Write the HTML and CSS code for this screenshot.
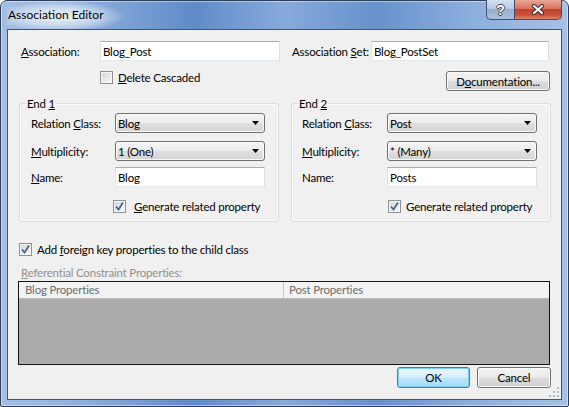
FILE: index.html
```html
<!DOCTYPE html>
<html lang="en">
<head>
<meta charset="UTF-8" />
<title>Association Editor</title>
<link rel="stylesheet" href="styles.css">
</head>
<body>

<div class="window">

  <!-- caption -->
  <div class="titlebar">
    <span class="title">Association Editor</span>
    <div class="caption-buttons">
      <div class="cap help">?</div>
      <div class="cap close">
        <svg width="14" height="11" viewBox="0 0 14 11">
          <path d="M3 2l8 7M11 2l-8 7" stroke="#3a2a2a" stroke-width="4.2" stroke-linecap="round" fill="none"/>
          <path d="M3 2l8 7M11 2l-8 7" stroke="#fff" stroke-width="2.2" stroke-linecap="round" fill="none"/>
        </svg>
      </div>
    </div>
  </div>

  <div class="client">

    <div class="row names">
      <span class="lbl lbl-assoc"><u>A</u>ssociation:</span>
      <div class="tb tb-assoc">Blog_Post</div>
      <span class="lbl lbl-set">Association <u>S</u>et:</span>
      <div class="tb tb-set">Blog_PostSet</div>
    </div>

    <div class="row opts">
      <span class="cb"></span>
      <span class="cb-text"><u>D</u>elete Cascaded</span>
      <div class="btn btn-doc">D<u>o</u>cumentation...</div>
    </div>

    <div class="ends">
      <fieldset class="group end1">
        <legend>End <u>1</u></legend>
        <div class="grow">
          <span class="glbl">Relation <u>C</u>lass:</span>
          <div class="combo"><span>Blog</span><svg class="arrow" width="7" height="4" viewBox="0 0 7 4"><path d="M0 0h7L3.5 4z" fill="#000"/></svg></div>
        </div>
        <div class="grow">
          <span class="glbl"><u>M</u>ultiplicity:</span>
          <div class="combo"><span>1 (One)</span><svg class="arrow" width="7" height="4" viewBox="0 0 7 4"><path d="M0 0h7L3.5 4z" fill="#000"/></svg></div>
        </div>
        <div class="grow name-row">
          <span class="glbl"><u>N</u>ame:</span>
          <div class="tb tb-name">Blog</div>
        </div>
        <div class="grow check-row">
          <span class="cb checked"><svg width="11" height="11" viewBox="0 0 11 11"><path d="M2 5.5l2.5 3L9 1.5" stroke="#4b5e8e" stroke-width="1.7" fill="none"/></svg></span>
          <span class="cb-text"><u>G</u>enerate related property</span>
        </div>
      </fieldset>

      <fieldset class="group end2">
        <legend>End <u>2</u></legend>
        <div class="grow">
          <span class="glbl">Relation <u>C</u>lass:</span>
          <div class="combo"><span>Post</span><svg class="arrow" width="7" height="4" viewBox="0 0 7 4"><path d="M0 0h7L3.5 4z" fill="#000"/></svg></div>
        </div>
        <div class="grow">
          <span class="glbl"><u>M</u>ultiplicity:</span>
          <div class="combo"><span>* (Many)</span><svg class="arrow" width="7" height="4" viewBox="0 0 7 4"><path d="M0 0h7L3.5 4z" fill="#000"/></svg></div>
        </div>
        <div class="grow name-row">
          <span class="glbl">Name:</span>
          <div class="tb tb-name">Posts</div>
        </div>
        <div class="grow check-row">
          <span class="cb checked"><svg width="11" height="11" viewBox="0 0 11 11"><path d="M2 5.5l2.5 3L9 1.5" stroke="#4b5e8e" stroke-width="1.7" fill="none"/></svg></span>
          <span class="cb-text">Generate related property</span>
        </div>
      </fieldset>
    </div>

    <div class="row fk">
      <span class="cb checked"><svg width="11" height="11" viewBox="0 0 11 11"><path d="M2 5.5l2.5 3L9 1.5" stroke="#4b5e8e" stroke-width="1.7" fill="none"/></svg></span>
      <span class="cb-text">Add <u>f</u>oreign key properties to the child class</span>
    </div>

    <div class="ref-label"><u>R</u>eferential Constraint Properties:</div>

    <div class="grid">
      <div class="grid-head">
        <span class="col col-blog">Blog Properties</span>
        <span class="col col-post">Post Properties</span>
      </div>
      <div class="grid-body"></div>
    </div>

    <div class="buttons">
      <div class="btn btn-ok">OK</div>
      <div class="btn btn-cancel">Cancel</div>
    </div>

    <svg class="grip" width="10" height="10" viewBox="0 0 10 10">
      <g fill="#b6bcc6">
        <rect x="8" y="0" width="2" height="2"/>
        <rect x="4" y="4" width="2" height="2"/><rect x="8" y="4" width="2" height="2"/>
        <rect x="0" y="8" width="2" height="2"/><rect x="4" y="8" width="2" height="2"/><rect x="8" y="8" width="2" height="2"/>
      </g>
    </svg>

  </div>
</div>

</body>
</html>
```

FILE: styles.css
```css
* {
  box-sizing: border-box;
}
body {
  margin: 0;
  background: #fff;
  font-family: Lato, "Liberation Sans", sans-serif;
  font-size: 11.5px;
  letter-spacing: -0.2px;
  color: #000;
  white-space: nowrap;
}
u {
  text-decoration: underline;
  text-underline-offset: 1px;
}

/* window frame */
.window {
  width: 569px;
  height: 407px;
  border: 1px solid #2c3d55;
  border-radius: 7px 7px 2px 2px;
  padding: 0 6px 6px;
  display: flex;
  flex-direction: column;
  background: linear-gradient(to right, #a3bee3 0%, #8fb0dd 14%, #5f8bc8 34%, #88aadb 50%, #6791cc 66%, #8eb0de 84%, #a6c1e5 100%);
  box-shadow: inset 0 0 0 1px rgba(255,255,255,0.45);
}
.titlebar {
  height: 28px;
  display: flex;
  align-items: flex-start;
}
.title {
  padding: 0 20px 0 1px;
  line-height: 28px;
  font-size: 12px;
  letter-spacing: 0;
  background: radial-gradient(ellipse at 45% 55%, rgba(255,255,255,0.85) 0%, rgba(255,255,255,0.45) 45%, rgba(255,255,255,0) 72%);
}
.caption-buttons {
  margin-left: auto;
  margin-top: -1px;
  display: flex;
}
.cap {
  height: 20px;
  border: 1px solid #3a4f6e;
  border-top: 0;
  display: flex;
  align-items: center;
  justify-content: center;
}
.help {
  width: 28px;
  border-right: 0;
  border-radius: 0 0 0 5px;
  background: linear-gradient(#d3e0f0, #b8c9e1 45%, #97afd0 50%, #aac1df);
  color: #fff;
  font-family: "Liberation Sans", sans-serif;
  font-weight: bold;
  font-size: 14px;
  text-shadow: 1px 0 #3d4a5e, -1px 0 #3d4a5e, 0 1px #3d4a5e, 0 -1px #3d4a5e;
}
.close {
  width: 48px;
  border-radius: 0 0 5px 0;
  background: linear-gradient(#e9a896, #d8735e 45%, #c2432c 50%, #c7503a 78%, #de8567);
}

/* client area */
.client {
  flex: 1;
  position: relative;
  border: 1px solid #3f5677;
  background: #f0f0f0;
  padding: 11px 10px 0 10px;
}
.row {
  display: flex;
  align-items: center;
}
.names {
  height: 20px;
  padding-left: 3px;
}
.lbl-assoc {
  width: 79px;
}
.lbl-set {
  width: 79px;
  margin-left: 12px;
}
.tb {
  height: 20px;
  border: 1px solid;
  border-color: #abadb3 #dbdfe6 #e3e9ef #e2e3ea;
  background: #fff;
  padding-left: 2px;
  display: flex;
  align-items: center;
}
.tb-assoc {
  width: 180px;
}
.tb-set {
  width: 178px;
}
.opts {
  margin-top: 10px;
  height: 20px;
  align-items: flex-start;
}
.opts .cb {
  margin-left: 82px;
}
.opts .cb-text {
  line-height: 13px;
}
.cb {
  width: 13px;
  height: 13px;
  flex-shrink: 0;
  border: 1px solid #8e8f8f;
  background: linear-gradient(135deg, #cfd2d6 0%, #e6e7e9 50%, #fbfbfb 100%);
  box-shadow: inset 0 0 0 1px #f6f6f6;
  display: flex;
  align-items: center;
  justify-content: center;
}
.cb-text {
  margin-left: 5px;
}
.btn {
  height: 20px;
  border: 1px solid #707070;
  border-radius: 3px;
  background: linear-gradient(#f3f3f3, #ebebeb 48%, #dddddd 52%, #d0d0d0);
  box-shadow: inset 0 0 0 1px #fbfbfb;
  display: flex;
  align-items: center;
  justify-content: center;
}
.btn-doc {
  width: 104px;
  margin-left: auto;
  margin-right: 1px;
}

/* end groups */
.ends {
  display: flex;
  gap: 12px;
  margin-top: 5px;
  padding-left: 1px;
}
.group {
  width: 260px;
  margin: 0;
  padding: 2px 0 7px 0;
  border: 1px solid #d5dfe5;
  border-radius: 3px;
  box-shadow: inset 0 0 0 1px #fbfcfd;
}
.group legend {
  margin-left: 6px;
  padding: 0 1px;
  line-height: 15px;
}
.grow {
  display: flex;
  align-items: center;
  height: 20px;
  padding-left: 11px;
}
.grow + .grow {
  margin-top: 8px;
}
.grow.name-row {
  margin-top: 6px;
}
.grow.check-row {
  margin-top: 12px;
  height: 15px;
  padding-left: 93px;
}
.end1 .check-row .cb-text {
  margin-left: 8px;
}
.end2 .grow {
  padding-left: 10px;
}
.end2 .grow.check-row {
  padding-left: 96px;
}
.glbl {
  width: 84px;
}
.end2 .glbl {
  width: 85px;
}
.combo {
  width: 150px;
  height: 20px;
  border: 1px solid #707070;
  border-radius: 3px;
  background: linear-gradient(#f5f5f5, #ececec 48%, #dfdfdf 52%, #d4d4d4);
  box-shadow: inset 0 0 0 1px #fbfbfb;
  display: flex;
  align-items: center;
  padding-left: 2px;
}
.combo .arrow {
  margin-left: auto;
  margin-right: 5px;
}
.tb-name {
  width: 150px;
}

/* foreign key + grid */
.fk {
  margin-top: 20px;
  height: 15px;
  padding-left: 1px;
}
.ref-label {
  margin-top: 8px;
  line-height: 15px;
  padding-left: 3px;
  color: #8f8f8f;
}
.grid {
  margin-top: 1px;
  width: 532px;
  height: 84px;
  border: 1px solid #141414;
  display: flex;
  flex-direction: column;
}
.grid-head {
  height: 17px;
  display: flex;
  background: #f3f3f3;
  border-bottom: 1px solid #b8b8b8;
  color: #6d6d6d;
}
.col {
  line-height: 16px;
}
.col-blog {
  width: 265px;
  padding-left: 6px;
  border-right: 1px solid #c4c4c4;
}
.col-post {
  padding-left: 5px;
}
.grid-body {
  flex: 1;
  background: #ababab;
}

/* dialog buttons */
.buttons {
  display: flex;
  justify-content: flex-end;
  gap: 7px;
  margin-top: 2px;
}
.buttons .btn {
  height: 21px;
}
.btn-ok {
  width: 73px;
  border-color: #3c7fb1;
  background: linear-gradient(#eaf6fd, #d9f0fc 48%, #bee6fd 52%, #a7d9f5);
  box-shadow: inset 0 0 0 1px #7fd0f5;
}
.btn-cancel {
  width: 74px;
}
.grip {
  position: absolute;
  right: 2px;
  bottom: 2px;
}
```
